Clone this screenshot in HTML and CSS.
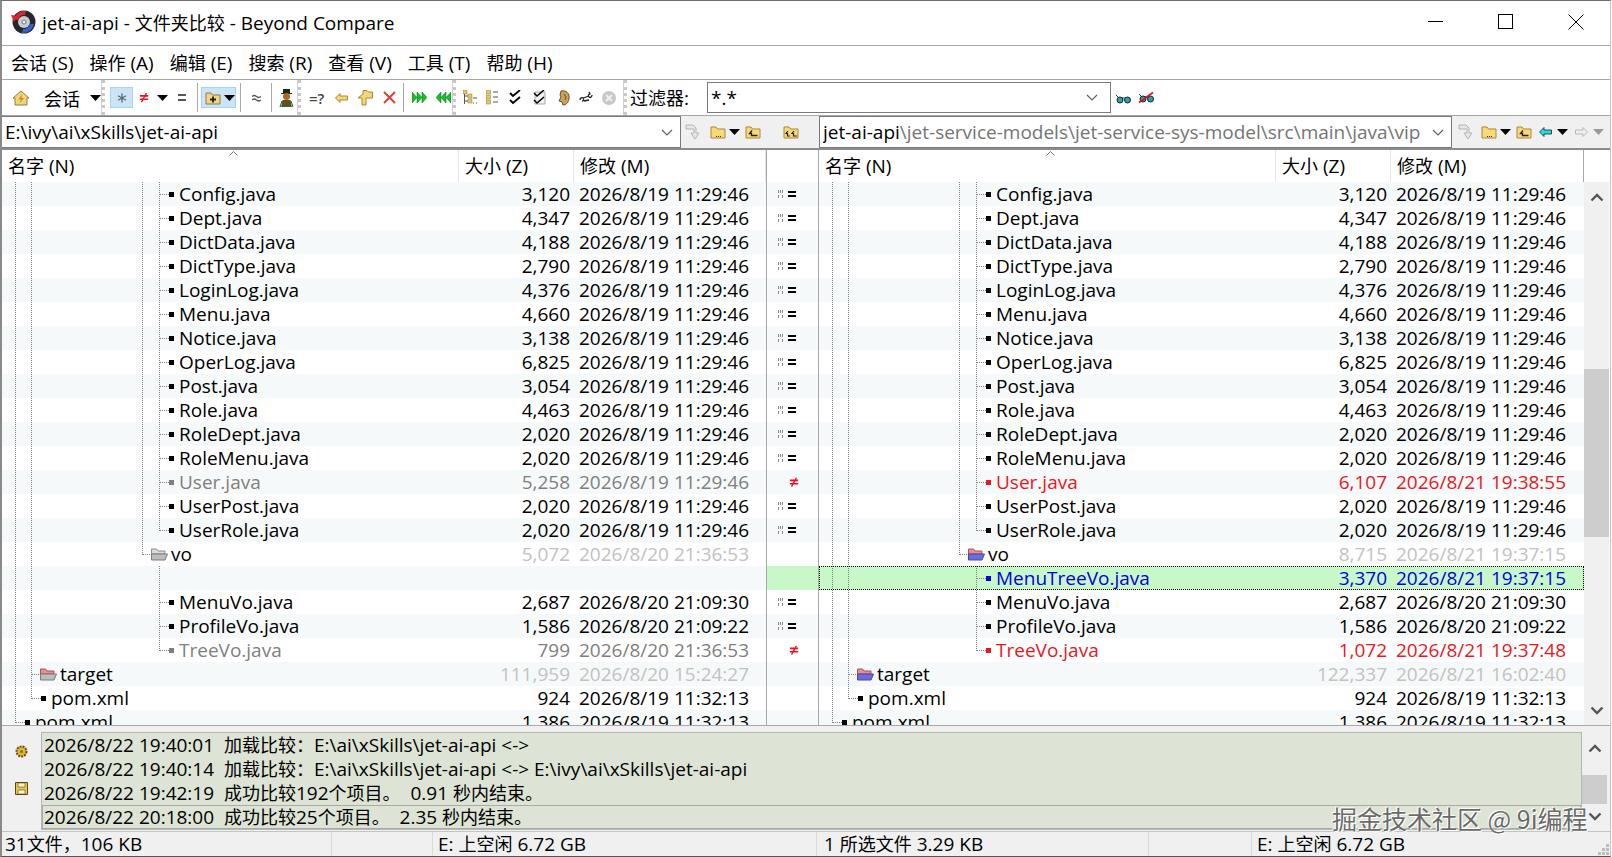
FILE: index.html
```html
<!DOCTYPE html>
<html lang="zh">

<head>
    <meta charset="UTF-8">
    <title>jet-ai-api - 文件夹比较 - Beyond Compare</title>
    <link rel="stylesheet" href="styles.css">
</head>

<body>
    <svg class="sprites" xmlns="http://www.w3.org/2000/svg">
        <symbol id="tri" viewBox="0 0 11 6"><path d="M0 0h11L5.500 6z" /></symbol>
        <symbol id="folder" viewBox="0 0 16 16"><path d="M1 3h5l1.500 2H15v9H1z" fill="#f7d978" stroke="#a8893a" /><path d="M6 12h1v1H6zm2 0h1v1H8zm2 0h1v1h-1z" fill="#333" /></symbol>
        <symbol id="folder-up" viewBox="0 0 16 16"><path d="M1 3h5l1.500 2H15v9H1z" fill="#f7d978" stroke="#a8893a" /><path d="M7 6.500L4.500 9.500H6.500v2h6" fill="none" stroke="#222" stroke-width="1.300" /></symbol>
        <symbol id="folder-up2" viewBox="0 0 16 16"><path d="M1 3h5l1.500 2H15v9H1z" fill="#f7d978" stroke="#a8893a" /><path d="M5 7L3 9.500h1.500V12H7M11 7L9 9.500h1.500V12H14" fill="none" stroke="#222" stroke-width="1.200" /></symbol>
        <symbol id="go-grey" viewBox="0 0 16 18"><path d="M1 2h7l3 3v5h3l-4 6-4-6h3V6H1z" fill="#e6e6e6" stroke="#b4b4b4" /></symbol>
        <symbol id="open-grey" viewBox="0 0 18 14"><path d="M1.500 2h5l1.500 2h7v3H1.500z" fill="#dcdcdc" stroke="#8c8c8c" /><path d="M1.500 13V7h16L15 13z" fill="#bdbdbd" stroke="#7c7c7c" /></symbol>
        <symbol id="open-left" viewBox="0 0 18 14"><path d="M1.500 2h5l1.500 2h7v3H1.500z" fill="#f08a94" stroke="#a45560" /><path d="M1.500 13V7h16L15 13z" fill="#bdbdbd" stroke="#7c7c7c" /></symbol>
        <symbol id="open-right" viewBox="0 0 18 14"><path d="M1.500 2h5l1.500 2h7v3H1.500z" fill="#f08a94" stroke="#a45560" /><path d="M1.500 13V7h16L15 13z" fill="#6c6ce0" stroke="#4a4a9c" /></symbol>
        <symbol id="same" viewBox="0 0 22 11">
            <path d="M0 1h1v3H0zm2 0h1v3H2zm2 0h1v3H4zM0 6h1v3H0zm4 0h1v3H4z" fill="#8a8a8a" />
            <path d="M10 2h8v2h-8zm0 4h8v2h-8z" fill="#000" />
        </symbol>
        <symbol id="diff" viewBox="0 0 12 12"><path d="M1 3.500h10M1 7.500h10" stroke="#f01020" stroke-width="2" /><path d="M9 0L3 11" stroke="#f01020" stroke-width="1.600" /></symbol>
        <symbol id="chev-up" viewBox="0 0 14 9"><path d="M1.500 7.500L7 2l5.500 5.500" fill="none" stroke="#555" stroke-width="2.400" /></symbol>
        <symbol id="chev-down" viewBox="0 0 14 9"><path d="M1.500 1.500L7 7l5.500-5.500" fill="none" stroke="#555" stroke-width="2.400" /></symbol>
        <symbol id="combo" viewBox="0 0 12 7"><path d="M1 1l5 5 5-5" fill="none" stroke="#606060" stroke-width="1.200" /></symbol>
        <symbol id="goggle" viewBox="0 0 17 12"><path d="M1 3l2 2M7 6h3" stroke="#333" fill="none" /><circle cx="5" cy="8" r="3" fill="#2fa39c" stroke="#124" /><circle cx="12.500" cy="8" r="3" fill="#2fa39c" stroke="#124" /></symbol>
    </svg>

    <div class="window">
        <div class="titlebar">
            <svg class="app-icon" width="26" height="26" viewBox="0 0 26 26">
                <circle cx="13" cy="13" r="11.500" fill="#26262c" />
                <path d="M3 10A11 11 0 0 1 15 2L14 6A7 7 0 0 0 7 11z" fill="#d8262a" />
                <path d="M0 6l7 1-4 6z" fill="#d8262a" />
                <path d="M23 15A11 11 0 0 1 11 24L12 20A7 7 0 0 0 19 15z" fill="#2a62d0" />
                <circle cx="13" cy="13" r="6" fill="#c8ccd0" />
                <circle cx="13" cy="13" r="2" fill="#f4f4f4" stroke="#777" />
            </svg>
            <span class="app-title">jet-ai-api - <span class="cjk">文件夹比较</span> - Beyond Compare</span>
            <div class="win-btns">
                <svg width="16" height="16" viewBox="0 0 16 16"><path d="M0 7.500h15" stroke="#000" /></svg>
                <svg width="16" height="16" viewBox="0 0 16 16"><rect x="0.500" y="0.500" width="14" height="14" fill="none" stroke="#000" /></svg>
                <svg width="16" height="16" viewBox="0 0 16 16"><path d="M0.500 0.500l15 15M15.500 0.500l-15 15" stroke="#000" /></svg>
            </div>
        </div>

        <div class="menubar">
            <span class="menu-item"><span class="cjk">会话</span> (S)</span>
            <span class="menu-item"><span class="cjk">操作</span> (A)</span>
            <span class="menu-item"><span class="cjk">编辑</span> (E)</span>
            <span class="menu-item"><span class="cjk">搜索</span> (R)</span>
            <span class="menu-item"><span class="cjk">查看</span> (V)</span>
            <span class="menu-item"><span class="cjk">工具</span> (T)</span>
            <span class="menu-item"><span class="cjk">帮助</span> (H)</span>
        </div>

        <div class="toolbar">
            <div class="tb-group group-session">
                <svg width="18" height="16" viewBox="0 0 18 16">
                    <path d="M9 1l8 7h-2v7H3V8H1z" fill="#ecd67c" stroke="#8f7f45" />
                    <path d="M10 4L6.500 9.500H9L7.500 13.500 12 8H9.500z" fill="#d98a1e" />
                </svg>
                <span class="session-label cjk">会话</span>
                <svg class="tri" width="11" height="6"><use href="#tri" /></svg>
            </div>

            <div class="tb-group group-filter">
                <div class="tb-on star-btn"><svg width="10" height="10" viewBox="0 0 10 10"><path d="M5 0.500v9M1 2.800l8 4.400M9 2.800l-8 4.400" stroke="#5d6670" stroke-width="1.300" /></svg></div>
                <svg class="ml6" width="10" height="12" viewBox="0 0 12 12"><use href="#diff" /></svg>
                <svg class="ml8 tri" width="11" height="6"><use href="#tri" /></svg>
                <svg class="ml10" width="8" height="7" viewBox="0 0 8 7"><path d="M0 0h8v2H0zm0 5h8v2H0z" fill="#555" /></svg>
                <i class="sep ml11"></i>
                <div class="tb-on folder-btn ml3">
                    <svg width="16" height="14" viewBox="0 0 16 14"><path d="M1 2h5l1.500 2H15v9H1z" fill="#f0d48a" stroke="#8f7a3c" /><path d="M8 5.500v6M5 8.500h6" stroke="#222" stroke-width="1.800" /></svg>
                    <svg class="tri" width="11" height="6"><use href="#tri" /></svg>
                </div>
                <i class="sep ml4"></i>
                <svg class="ml11" width="9" height="8" viewBox="0 0 9 8"><path d="M0 2.500q2-2 4.500 0T9 2.500M0 6q2-2 4.500 0T9 6" fill="none" stroke="#555" stroke-width="1.300" /></svg>
                <i class="sep ml10"></i>
                <svg class="ml7" width="15" height="20" viewBox="0 0 15 20">
                    <path d="M4 1h7v4H4zM2 5h11v1H2z" fill="#1c2a1c" />
                    <circle cx="7.500" cy="8.500" r="3.500" fill="#b5651d" />
                    <path d="M2 19l2-7h7l2 7z" fill="#7a4a20" />
                    <path d="M4 19v-7M7.500 19v-7M11 19v-7M1 19l2-6M14 19l-2-6" stroke="#162" />
                </svg>
            </div>

            <div class="tb-group group-copy">
                <span class="eq-q">=?</span>
                <svg class="ml10" width="13" height="10" viewBox="0 0 13 10"><path d="M0.500 5L5 0.500V3h7.500v4H5v2.500z" fill="#f4d878" stroke="#a08a3a" /></svg>
                <svg class="ml9" width="16" height="16" viewBox="0 0 16 16"><path d="M6 0.500h4l1.500 1.500h4v6H9v7H5V8H1l5-4z" fill="#f4d878" stroke="#a08a3a" /></svg>
                <svg class="ml10" width="13" height="13" viewBox="0 0 13 13"><path d="M1 1l11 11M12 1L1 12" stroke="#e04030" stroke-width="2" /></svg>
                <i class="sep ml7"></i>
                <svg class="ml8" width="15" height="11" viewBox="0 0 15 11"><path d="M0 0l5 5.500L0 11zM5 0l5 5.500L5 11zM10 0l5 5.500-5 5.500z" fill="#18c02c" stroke="#0a6a18" stroke-width="0.500" /></svg>
                <svg class="ml9" width="15" height="11" viewBox="0 0 15 11"><path d="M15 0l-5 5.500 5 5.500zM10 0L5 5.500l5 5.500zM5 0L0 5.500 5 11z" fill="#18c02c" stroke="#0a6a18" stroke-width="0.500" /></svg>
            </div>

            <div class="tb-group group-view">
                <svg width="15" height="15" viewBox="0 0 15 15"><path d="M1.500 3v11M2 6h4M2 11h4M10 13h1M13 13h1M10 8h4" stroke="#555" fill="none" /><rect x="0" y="0" width="4" height="4" fill="#e6c860" stroke="#8f7a3c" stroke-width="0.500" /><rect x="5" y="4" width="4" height="4" fill="#e6c860" stroke="#8f7a3c" stroke-width="0.500" /><rect x="5" y="9" width="4" height="4" fill="#e6c860" stroke="#8f7a3c" stroke-width="0.500" /></svg>
                <svg class="ml8" width="12" height="15" viewBox="0 0 12 15"><path d="M7 2h5M7 7h5M7 12h5" stroke="#555" /><rect x="0.500" y="0" width="4" height="4" fill="#e6c860" stroke="#8f7a3c" stroke-width="0.500" /><rect x="0.500" y="5" width="4" height="4" fill="#e6c860" stroke="#8f7a3c" stroke-width="0.500" /><rect x="0.500" y="10" width="4" height="4" fill="#e6c860" stroke="#8f7a3c" stroke-width="0.500" /></svg>
                <svg class="ml11" width="12" height="15" viewBox="0 0 12 15"><path d="M1 3l3 3 7-6M1 10l3 3 7-6" fill="none" stroke="#000" stroke-width="1.800" /></svg>
                <svg class="ml12" width="13" height="15" viewBox="0 0 13 15"><path d="M2 2h10v12H2z" fill="#f0f0f0" stroke="#aaa" /><path d="M1 3l3 3 7-6M1 10l3 3 7-6" fill="none" stroke="#000" stroke-width="1.500" /></svg>
                <svg class="ml12" width="12" height="16" viewBox="0 0 12 16"><path d="M3 1c5-1 9 2 8 8-1 4-3 6-6 6l-1-3-3-1 2-4-1-2z" fill="#c9a25c" stroke="#6a5224" /><path d="M6 4l2 3-1 3" fill="none" stroke="#6a5224" /></svg>
                <svg class="ml9" width="14" height="13" viewBox="0 0 14 13"><path d="M1 9c0-2 2-3 3-2s1 3-1 3M13 4c0 2-2 3-3 2S9 3 11 3M4 7l6-2M5 10l5-1M10 1l1 2-2 1" fill="none" stroke="#222" stroke-width="1.300" /></svg>
                <svg class="ml9" width="14" height="14" viewBox="0 0 14 14"><circle cx="7" cy="7" r="7" fill="#c8c8c8" /><path d="M4 4l6 6M10 4l-6 6" stroke="#f0f0f0" stroke-width="2" /></svg>
            </div>

            <div class="tb-group group-name">
                <span class="filter-label"><span class="cjk">过滤器</span>:</span>
                <div class="filter-box">
                    <span>*.*</span>
                    <svg width="12" height="7"><use href="#combo" /></svg>
                </div>
                <svg class="ml4" width="17" height="12"><use href="#goggle" /></svg>
                <svg class="ml6" width="17" height="13" viewBox="0 0 17 13"><use href="#goggle" width="17" height="12" /><path d="M1 11.500L15 1.500" stroke="#e01010" stroke-width="1.600" /></svg>
            </div>
        </div>

        <div class="pathbar">
            <div class="path-box path-left">
                <span class="path-text">E:\ivy\ai\xSkills\jet-ai-api</span>
                <svg width="12" height="7"><use href="#combo" /></svg>
            </div>
            <svg class="ml4" width="16" height="18"><use href="#go-grey" /></svg>
            <svg class="ml9" width="16" height="16"><use href="#folder" /></svg>
            <svg class="ml3 tri" width="11" height="6"><use href="#tri" /></svg>
            <svg class="ml5" width="16" height="16"><use href="#folder-up" /></svg>
            <svg class="ml-wide" width="16" height="16"><use href="#folder-up2" /></svg>

            <div class="path-box path-right">
                <span class="path-text">jet-ai-api<span class="path-dim">\jet-service-models\jet-service-sys-model\src\main\java\vip\vo</span></span>
                <svg width="12" height="7"><use href="#combo" /></svg>
            </div>
            <svg class="ml6" width="16" height="18"><use href="#go-grey" /></svg>
            <svg class="ml7" width="16" height="16"><use href="#folder" /></svg>
            <svg class="ml3 tri" width="11" height="6"><use href="#tri" /></svg>
            <svg class="ml5" width="16" height="16"><use href="#folder-up" /></svg>
            <svg class="ml7" width="13" height="10" viewBox="0 0 13 10"><path d="M0.500 5L5 0.500V3h7.500v4H5v2.500z" fill="#19e0e6" stroke="#222" stroke-width="0.800" /></svg>
            <svg class="ml5 tri" width="11" height="6"><use href="#tri" /></svg>
            <svg class="ml7" width="13" height="10" viewBox="0 0 13 10"><path d="M12.500 5L8 0.500V3H0.500v4H8v2.500z" fill="#eee" stroke="#b8b8b8" /></svg>
            <svg class="ml5 tri tri-off" width="11" height="6"><use href="#tri" /></svg>
        </div>

        <div class="panes">
            <div class="pane">
                <div class="head">
                    <div class="head-name"><span class="cjk">名字</span> (N)<svg class="sort" width="9" height="5" viewBox="0 0 9 5"><path d="M0.500 4.500l4-4 4 4" fill="none" stroke="#777" /></svg></div>
                    <div class="head-size"><span class="cjk">大小</span> (Z)</div>
                    <div class="head-date"><span class="cjk">修改</span> (M)</div>
                </div>
                <div class="rows">
                    <div class="row"><div class="name deep"><i class="stub"></i><b class="sq"></b>Config.java</div><div class="size">3,120</div><div class="date">2026/8/19 11:29:46</div></div>
                    <div class="row"><div class="name deep"><i class="stub"></i><b class="sq"></b>Dept.java</div><div class="size">4,347</div><div class="date">2026/8/19 11:29:46</div></div>
                    <div class="row"><div class="name deep"><i class="stub"></i><b class="sq"></b>DictData.java</div><div class="size">4,188</div><div class="date">2026/8/19 11:29:46</div></div>
                    <div class="row"><div class="name deep"><i class="stub"></i><b class="sq"></b>DictType.java</div><div class="size">2,790</div><div class="date">2026/8/19 11:29:46</div></div>
                    <div class="row"><div class="name deep"><i class="stub"></i><b class="sq"></b>LoginLog.java</div><div class="size">4,376</div><div class="date">2026/8/19 11:29:46</div></div>
                    <div class="row"><div class="name deep"><i class="stub"></i><b class="sq"></b>Menu.java</div><div class="size">4,660</div><div class="date">2026/8/19 11:29:46</div></div>
                    <div class="row"><div class="name deep"><i class="stub"></i><b class="sq"></b>Notice.java</div><div class="size">3,138</div><div class="date">2026/8/19 11:29:46</div></div>
                    <div class="row"><div class="name deep"><i class="stub"></i><b class="sq"></b>OperLog.java</div><div class="size">6,825</div><div class="date">2026/8/19 11:29:46</div></div>
                    <div class="row"><div class="name deep"><i class="stub"></i><b class="sq"></b>Post.java</div><div class="size">3,054</div><div class="date">2026/8/19 11:29:46</div></div>
                    <div class="row"><div class="name deep"><i class="stub"></i><b class="sq"></b>Role.java</div><div class="size">4,463</div><div class="date">2026/8/19 11:29:46</div></div>
                    <div class="row"><div class="name deep"><i class="stub"></i><b class="sq"></b>RoleDept.java</div><div class="size">2,020</div><div class="date">2026/8/19 11:29:46</div></div>
                    <div class="row"><div class="name deep"><i class="stub"></i><b class="sq"></b>RoleMenu.java</div><div class="size">2,020</div><div class="date">2026/8/19 11:29:46</div></div>
                    <div class="row older"><div class="name deep"><i class="stub"></i><b class="sq"></b>User.java</div><div class="size">5,258</div><div class="date">2026/8/19 11:29:46</div></div>
                    <div class="row"><div class="name deep"><i class="stub"></i><b class="sq"></b>UserPost.java</div><div class="size">2,020</div><div class="date">2026/8/19 11:29:46</div></div>
                    <div class="row"><div class="name deep last"><i class="stub"></i><b class="sq"></b>UserRole.java</div><div class="size">2,020</div><div class="date">2026/8/19 11:29:46</div></div>
                    <div class="row dim"><div class="name vo"><i class="stub"></i><svg class="fold" width="18" height="14"><use href="#open-grey" /></svg><span class="fold-name">vo</span></div><div class="size">5,072</div><div class="date">2026/8/20 21:36:53</div></div>
                    <div class="row"><div class="name sub"></div></div>
                    <div class="row"><div class="name sub"><i class="stub"></i><b class="sq"></b>MenuVo.java</div><div class="size">2,687</div><div class="date">2026/8/20 21:09:30</div></div>
                    <div class="row"><div class="name sub"><i class="stub"></i><b class="sq"></b>ProfileVo.java</div><div class="size">1,586</div><div class="date">2026/8/20 21:09:22</div></div>
                    <div class="row older"><div class="name sub last"><i class="stub"></i><b class="sq"></b>TreeVo.java</div><div class="size">799</div><div class="date">2026/8/20 21:36:53</div></div>
                    <div class="row dim"><div class="name lvl2"><i class="stub stub-short"></i><svg class="fold" width="18" height="14"><use href="#open-left" /></svg><span class="fold-name">target</span></div><div class="size">111,959</div><div class="date">2026/8/20 15:24:27</div></div>
                    <div class="row"><div class="name lvl2 last"><i class="stub"></i><b class="sq"></b>pom.xml</div><div class="size">924</div><div class="date">2026/8/19 11:32:13</div></div>
                    <div class="row"><div class="name lvl1"><i class="stub"></i><b class="sq"></b>pom.xml</div><div class="size">1,386</div><div class="date">2026/8/19 11:32:13</div></div>
                </div>
            </div>

            <div class="gutter">
                <div class="head"></div>
                <div class="rows">
                    <div class="row mark"><svg width="22" height="11"><use href="#same" /></svg></div>
                    <div class="row mark"><svg width="22" height="11"><use href="#same" /></svg></div>
                    <div class="row mark"><svg width="22" height="11"><use href="#same" /></svg></div>
                    <div class="row mark"><svg width="22" height="11"><use href="#same" /></svg></div>
                    <div class="row mark"><svg width="22" height="11"><use href="#same" /></svg></div>
                    <div class="row mark"><svg width="22" height="11"><use href="#same" /></svg></div>
                    <div class="row mark"><svg width="22" height="11"><use href="#same" /></svg></div>
                    <div class="row mark"><svg width="22" height="11"><use href="#same" /></svg></div>
                    <div class="row mark"><svg width="22" height="11"><use href="#same" /></svg></div>
                    <div class="row mark"><svg width="22" height="11"><use href="#same" /></svg></div>
                    <div class="row mark"><svg width="22" height="11"><use href="#same" /></svg></div>
                    <div class="row mark"><svg width="22" height="11"><use href="#same" /></svg></div>
                    <div class="row mark"><svg class="ne" width="10" height="11" viewBox="0 0 12 12"><use href="#diff" /></svg></div>
                    <div class="row mark"><svg width="22" height="11"><use href="#same" /></svg></div>
                    <div class="row mark"><svg width="22" height="11"><use href="#same" /></svg></div>
                    <div class="row mark"></div>
                    <div class="row mark sel-fill"></div>
                    <div class="row mark"><svg width="22" height="11"><use href="#same" /></svg></div>
                    <div class="row mark"><svg width="22" height="11"><use href="#same" /></svg></div>
                    <div class="row mark"><svg class="ne" width="10" height="11" viewBox="0 0 12 12"><use href="#diff" /></svg></div>
                    <div class="row mark"></div>
                    <div class="row mark"></div>
                    <div class="row mark"></div>
                </div>
            </div>

            <div class="pane pane-right">
                <div class="head">
                    <div class="head-name"><span class="cjk">名字</span> (N)<svg class="sort" width="9" height="5" viewBox="0 0 9 5"><path d="M0.500 4.500l4-4 4 4" fill="none" stroke="#777" /></svg></div>
                    <div class="head-size"><span class="cjk">大小</span> (Z)</div>
                    <div class="head-date"><span class="cjk">修改</span> (M)</div>
                </div>
                <div class="rows">
                    <div class="row"><div class="name deep"><i class="stub"></i><b class="sq"></b>Config.java</div><div class="size">3,120</div><div class="date">2026/8/19 11:29:46</div></div>
                    <div class="row"><div class="name deep"><i class="stub"></i><b class="sq"></b>Dept.java</div><div class="size">4,347</div><div class="date">2026/8/19 11:29:46</div></div>
                    <div class="row"><div class="name deep"><i class="stub"></i><b class="sq"></b>DictData.java</div><div class="size">4,188</div><div class="date">2026/8/19 11:29:46</div></div>
                    <div class="row"><div class="name deep"><i class="stub"></i><b class="sq"></b>DictType.java</div><div class="size">2,790</div><div class="date">2026/8/19 11:29:46</div></div>
                    <div class="row"><div class="name deep"><i class="stub"></i><b class="sq"></b>LoginLog.java</div><div class="size">4,376</div><div class="date">2026/8/19 11:29:46</div></div>
                    <div class="row"><div class="name deep"><i class="stub"></i><b class="sq"></b>Menu.java</div><div class="size">4,660</div><div class="date">2026/8/19 11:29:46</div></div>
                    <div class="row"><div class="name deep"><i class="stub"></i><b class="sq"></b>Notice.java</div><div class="size">3,138</div><div class="date">2026/8/19 11:29:46</div></div>
                    <div class="row"><div class="name deep"><i class="stub"></i><b class="sq"></b>OperLog.java</div><div class="size">6,825</div><div class="date">2026/8/19 11:29:46</div></div>
                    <div class="row"><div class="name deep"><i class="stub"></i><b class="sq"></b>Post.java</div><div class="size">3,054</div><div class="date">2026/8/19 11:29:46</div></div>
                    <div class="row"><div class="name deep"><i class="stub"></i><b class="sq"></b>Role.java</div><div class="size">4,463</div><div class="date">2026/8/19 11:29:46</div></div>
                    <div class="row"><div class="name deep"><i class="stub"></i><b class="sq"></b>RoleDept.java</div><div class="size">2,020</div><div class="date">2026/8/19 11:29:46</div></div>
                    <div class="row"><div class="name deep"><i class="stub"></i><b class="sq"></b>RoleMenu.java</div><div class="size">2,020</div><div class="date">2026/8/19 11:29:46</div></div>
                    <div class="row newer"><div class="name deep"><i class="stub"></i><b class="sq"></b>User.java</div><div class="size">6,107</div><div class="date">2026/8/21 19:38:55</div></div>
                    <div class="row"><div class="name deep"><i class="stub"></i><b class="sq"></b>UserPost.java</div><div class="size">2,020</div><div class="date">2026/8/19 11:29:46</div></div>
                    <div class="row"><div class="name deep last"><i class="stub"></i><b class="sq"></b>UserRole.java</div><div class="size">2,020</div><div class="date">2026/8/19 11:29:46</div></div>
                    <div class="row dim"><div class="name vo"><i class="stub"></i><svg class="fold" width="18" height="14"><use href="#open-right" /></svg><span class="fold-name">vo</span></div><div class="size">8,715</div><div class="date">2026/8/21 19:37:15</div></div>
                    <div class="row selected"><div class="name sub"><i class="stub"></i><b class="sq"></b>MenuTreeVo.java</div><div class="size">3,370</div><div class="date">2026/8/21 19:37:15</div></div>
                    <div class="row"><div class="name sub"><i class="stub"></i><b class="sq"></b>MenuVo.java</div><div class="size">2,687</div><div class="date">2026/8/20 21:09:30</div></div>
                    <div class="row"><div class="name sub"><i class="stub"></i><b class="sq"></b>ProfileVo.java</div><div class="size">1,586</div><div class="date">2026/8/20 21:09:22</div></div>
                    <div class="row newer"><div class="name sub last"><i class="stub"></i><b class="sq"></b>TreeVo.java</div><div class="size">1,072</div><div class="date">2026/8/21 19:37:48</div></div>
                    <div class="row dim"><div class="name lvl2"><i class="stub stub-short"></i><svg class="fold" width="18" height="14"><use href="#open-right" /></svg><span class="fold-name">target</span></div><div class="size">122,337</div><div class="date">2026/8/21 16:02:40</div></div>
                    <div class="row"><div class="name lvl2 last"><i class="stub"></i><b class="sq"></b>pom.xml</div><div class="size">924</div><div class="date">2026/8/19 11:32:13</div></div>
                    <div class="row"><div class="name lvl1"><i class="stub"></i><b class="sq"></b>pom.xml</div><div class="size">1,386</div><div class="date">2026/8/19 11:32:13</div></div>
                </div>
            </div>

            <div class="scroll-col">
                <div class="scroll-corner"></div>
                <div class="scrollbar">
                    <svg width="14" height="9"><use href="#chev-up" /></svg>
                    <div class="thumb thumb-main"></div>
                    <svg class="chev-bottom" width="14" height="9"><use href="#chev-down" /></svg>
                </div>
            </div>
        </div>

        <div class="logpanel">
            <div class="log-tools">
                <svg width="13" height="13" viewBox="0 0 13 13"><circle cx="6.500" cy="6.500" r="5" fill="#e0b830" stroke="#6a5214" stroke-width="2" stroke-dasharray="2 1" /><circle cx="6.500" cy="6.500" r="1.500" fill="#8a6a14" /></svg>
                <svg width="13" height="13" viewBox="0 0 13 13"><path d="M0.500 0.500h12v12h-12z" fill="#e8c84a" stroke="#5a4a10" /><path d="M3 1h7v4H3zM3 8h7v4H3z" fill="#fff6c8" stroke="#5a4a10" stroke-width="0.600" /></svg>
            </div>
            <div class="log-list">
                <div class="log-row">2026/8/22 19:40:01  <span class="cjk">加载比较&#xFF1A;</span>E:\ai\xSkills\jet-ai-api &lt;-&gt;</div>
                <div class="log-row">2026/8/22 19:40:14  <span class="cjk">加载比较&#xFF1A;</span>E:\ai\xSkills\jet-ai-api &lt;-&gt; E:\ivy\ai\xSkills\jet-ai-api</div>
                <div class="log-row">2026/8/22 19:42:19  <span class="cjk">成功比较</span>192<span class="cjk">个项目。</span>  0.91 <span class="cjk">秒内结束。</span></div>
                <div class="log-row log-current">2026/8/22 20:18:00  <span class="cjk">成功比较</span>25<span class="cjk">个项目。</span>  2.35 <span class="cjk">秒内结束。</span></div>
            </div>
            <div class="scroll-col">
                <div class="scrollbar">
                    <svg width="14" height="9"><use href="#chev-up" /></svg>
                    <div class="thumb thumb-log"></div>
                    <svg class="chev-bottom" width="14" height="9"><use href="#chev-down" /></svg>
                </div>
            </div>
        </div>

        <div class="statusbar">
            <div class="cell c-files">31<span class="cjk">文件&#xFF0C;</span>106 KB</div>
            <div class="cell c-blank"></div>
            <div class="cell c-free">E: <span class="cjk">上空闲</span> 6.72 GB</div>
            <div class="cell c-sel">1 <span class="cjk">所选文件</span> 3.29 KB</div>
            <div class="cell c-blank"></div>
            <div class="cell c-free2">E: <span class="cjk">上空闲</span> 6.72 GB</div>
            <svg class="grip" width="11" height="11" viewBox="0 0 11 11"><path d="M8 0h3v3H8zM4 4h3v3H4zM8 4h3v3H8zM0 8h3v3H0zM4 8h3v3H4zM8 8h3v3H8z" fill="#bdbdbd" /></svg>
        </div>

        <div class="watermark">掘金技术社区 @ 9i编程</div>
    </div>
</body>

</html>
```

FILE: styles.css
```css
html,
body {
    margin: 0;
    padding: 0;
    background: #fff;
    overflow: hidden;
}

body {
    font-family: "Open Sans", "Noto Sans CJK SC", sans-serif;
    font-size: 19px;
    color: #000;
}

.cjk {
    font-size: 18px;
}

.sprites {
    display: none;
}

svg {
    flex: none;
    display: block;
}

.window {
    position: relative;
    width: 1611px;
    height: 857px;
    box-sizing: border-box;
    border-top: 1px solid #6e6e6e;
    border-left: 2px solid #8a8a8a;
    border-right: 1px solid #c4c4c4;
    border-bottom: 1px solid #555;
    display: flex;
    flex-direction: column;
}

.ml3 { margin-left: 3px; }
.ml4 { margin-left: 4px; }
.ml5 { margin-left: 5px; }
.ml6 { margin-left: 6px; }
.ml7 { margin-left: 7px; }
.ml8 { margin-left: 8px; }
.ml9 { margin-left: 9px; }
.ml10 { margin-left: 10px; }
.ml11 { margin-left: 11px; }
.ml12 { margin-left: 12px; }
.ml-wide { margin-left: 22px; }

/* title + menu */
.titlebar {
    height: 44px;
    box-sizing: border-box;
    display: flex;
    align-items: center;
    padding: 0 0 2px 9px;
    flex: none;
}

.app-icon {
    margin-right: 5px;
}

.win-btns {
    margin-left: auto;
    margin-right: 26px;
    display: flex;
    gap: 54px;
}

.menubar {
    height: 33px;
    flex: none;
    border-top: 1px solid #a6a6a6;
    display: flex;
    align-items: center;
    padding-left: 9px;
    gap: 16px;
}

.menu-item {
    white-space: nowrap;
}

/* toolbar */
.toolbar {
    height: 35px;
    flex: none;
    border-top: 1px solid #a6a6a6;
    border-bottom: 1px solid #a6a6a6;
    display: flex;
    align-items: stretch;
}

.tb-group {
    display: flex;
    align-items: center;
    box-sizing: border-box;
    border-right: 1px solid #cfcfcf;
    flex: none;
}

.tb-group + .tb-group {
    border-left: 3px dotted #c8c8c8;
}

.group-session {
    width: 100px;
    padding-left: 10px;
}

.session-label {
    margin-left: 14px;
    width: 47px;
}

.group-filter {
    width: 196px;
    padding-left: 5px;
}

.group-copy {
    width: 155px;
    padding-left: 8px;
}

.group-view {
    width: 171px;
    padding-left: 7px;
}

.group-name {
    flex: 1;
    border-right: none;
    padding-left: 3px;
}

.tri {
    fill: #000;
}

.tri-off {
    fill: #9a9a9a;
}

.sep {
    width: 1px;
    height: 29px;
    background: #a8a8a8;
    flex: none;
}

.tb-on {
    height: 21px;
    box-sizing: border-box;
    background: #cce4f7;
    border: 1px solid #a8d4f4;
    display: flex;
    align-items: center;
}

.star-btn {
    width: 23px;
    justify-content: center;
}

.folder-btn {
    width: 35px;
    padding-left: 3px;
    gap: 3px;
}

.eq-q {
    color: #444;
    font-size: 15px;
    font-weight: 600;
    width: 16px;
}

.filter-label {
    width: 77px;
    white-space: nowrap;
}

.filter-box {
    width: 404px;
    height: 31px;
    box-sizing: border-box;
    border: 1px solid #7a7a7a;
    display: flex;
    align-items: center;
    justify-content: space-between;
    padding: 0 12px 0 3px;
}

/* path bar */
.pathbar {
    height: 32px;
    flex: none;
    background: #f0f0f0;
    border-bottom: 2px solid #8c8c8c;
    display: flex;
    align-items: center;
}

.path-box {
    height: 32px;
    box-sizing: border-box;
    background: #fff;
    border: 1px solid #7a7a7a;
    display: flex;
    align-items: center;
    justify-content: space-between;
    padding: 0 7px 0 3px;
    flex: none;
}

.path-left {
    width: 679px;
    border-left: none;
}

.path-right {
    width: 633px;
    margin-left: 20px;
}

.path-text {
    width: 598px;
    overflow: hidden;
    white-space: nowrap;
}

.path-dim {
    color: #757575;
}

/* file panes */
.panes {
    height: 575px;
    flex: none;
    display: flex;
}

.pane {
    width: 764px;
    flex: none;
}

.pane-right {
    width: 765px;
}

.head {
    height: 32px;
    display: flex;
    box-sizing: border-box;
    background: #fff;
}

.head > div {
    border-right: 1px solid #e4e4e4;
    padding-left: 6px;
    line-height: 32px;
    box-sizing: border-box;
    position: relative;
    white-space: nowrap;
}

.head-name {
    width: 457px;
}

.head-size {
    width: 115px;
}

.head-date {
    flex: 1;
}

.pane-right .head {
    border-right: 1px solid #a8a8a8;
}

.pane-right .head-date {
    border-right: none;
}

.sort {
    position: absolute;
    left: 227px;
    top: 1px;
}

.rows {
    height: 543px;
    overflow: hidden;
}

.row {
    height: 24px;
    line-height: 24px;
    display: flex;
    white-space: nowrap;
}

.row:nth-child(odd) {
    background: #f6f9f9;
}

.name {
    width: 455px;
    flex: none;
    box-sizing: border-box;
    display: flex;
    align-items: center;
    background-repeat: no-repeat;
    --dot: repeating-linear-gradient(to bottom, #808080 0 1px, transparent 1px 2px);
}

/* tree guides, drawn as dotted backgrounds */
.deep {
    padding-left: 157px;
    background-image: var(--dot), var(--dot), var(--dot), var(--dot);
    background-position: 13px 0, 29px 0, 140px 0, 157px 0;
    background-size: 1px 100%, 1px 100%, 1px 100%, 1px 100%;
}

.deep.last {
    background-size: 1px 100%, 1px 100%, 1px 100%, 1px 50%;
}

.vo {
    padding-left: 140px;
    background-image: var(--dot), var(--dot), var(--dot);
    background-position: 13px 0, 29px 0, 140px 0;
    background-size: 1px 100%, 1px 100%, 1px 50%;
}

.sub {
    padding-left: 157px;
    background-image: var(--dot), var(--dot), var(--dot);
    background-position: 13px 0, 29px 0, 157px 0;
    background-size: 1px 100%, 1px 100%, 1px 100%;
}

.sub.last {
    background-size: 1px 100%, 1px 100%, 1px 50%;
}

.lvl2 {
    padding-left: 29px;
    background-image: var(--dot), var(--dot);
    background-position: 13px 0, 29px 0;
    background-size: 1px 100%, 1px 100%;
}

.lvl2.last {
    background-size: 1px 100%, 1px 50%;
}

.lvl1 {
    padding-left: 13px;
    background-image: var(--dot);
    background-position: 13px 0;
    background-size: 1px 50%;
}

.stub {
    width: 10px;
    height: 0;
    border-top: 1px dotted #808080;
    flex: none;
}

.stub-short,
.vo .stub {
    width: 8px;
}

.sq {
    width: 5px;
    height: 5px;
    background: currentColor;
    margin-right: 5px;
    flex: none;
}

.fold-name {
    margin-left: 3px;
}

.size {
    width: 113px;
    flex: none;
    text-align: right;
}

.date {
    margin-left: 9px;
}

.older {
    color: #7f7f7f;
}

.dim .size,
.dim .date {
    color: #c2c2c2;
}

.newer {
    color: #ef1520;
}

.selected {
    color: #0000e6;
    background: #c8f8c8 !important;
    outline: 1px dotted #000;
    outline-offset: -1px;
}

/* middle column */
.gutter {
    width: 51px;
    flex: none;
    border-left: 1px solid #a8a8a8;
    border-right: 1px solid #a8a8a8;
}

.mark {
    align-items: center;
    padding-left: 11px;
}

.mark .ne {
    margin-left: 11px;
}

.sel-fill {
    background: #c8f8c8 !important;
}

/* scrollbars */
.scroll-col {
    flex: 1;
    display: flex;
    flex-direction: column;
}

.scroll-corner {
    height: 32px;
    flex: none;
}

.scrollbar {
    width: 25px;
    flex: 1;
    background: #f0f0f0;
    display: flex;
    flex-direction: column;
    align-items: center;
    padding-top: 11px;
    padding-bottom: 10px;
    box-sizing: border-box;
}

.thumb {
    width: 100%;
    background: #cdcdcd;
    flex: none;
}

.thumb-main {
    height: 168px;
    margin-top: 167px;
}

.thumb-log {
    height: 29px;
    margin-top: 22px;
}

.chev-bottom {
    margin-top: auto;
}

/* log */
.logpanel {
    height: 106px;
    flex: none;
    box-sizing: border-box;
    background: #f0f0f0;
    border-top: 1px solid #a8a8a8;
    display: flex;
    padding-top: 6px;
}

.logpanel .scrollbar {
    margin-top: -6px;
    padding-top: 18px;
    padding-bottom: 10px;
    height: 105px;
}

.log-tools {
    width: 39px;
    flex: none;
    display: flex;
    flex-direction: column;
    align-items: center;
    padding-top: 13px;
    gap: 24px;
    box-sizing: border-box;
}

.log-list {
    width: 1541px;
    height: 98px;
    flex: none;
    box-sizing: border-box;
    background: #dde4d5;
    border: 1px solid #b4b8ae;
}

.log-row {
    height: 24px;
    line-height: 24px;
    padding-left: 2px;
    white-space: pre;
}

.log-current {
    outline: 1px solid #a8aca2;
    outline-offset: -1px;
}

/* status bar */
.statusbar {
    flex: 1;
    background: #f0f0f0;
    border-top: 1px solid #c4c4c4;
    display: flex;
    align-items: center;
    position: relative;
}

.cell {
    box-sizing: border-box;
    height: 100%;
    padding-left: 3px;
    line-height: 24px;
    border-right: 1px solid #dadada;
    white-space: nowrap;
}

.cell:nth-child(1) { width: 330px; }
.cell:nth-child(2) { width: 101px; }
.cell:nth-child(3) { width: 384px; padding-left: 5px; }
.cell:nth-child(4) { width: 332px; padding-left: 7px; }
.cell:nth-child(5) { width: 103px; }
.cell:nth-child(6) { border-right: none; padding-left: 5px; }

.grip {
    position: absolute;
    right: 1px;
    bottom: 1px;
}

.watermark {
    position: absolute;
    left: 1330px;
    top: 800px;
    font-family: "Noto Sans CJK SC", sans-serif;
    font-size: 25px;
    line-height: 34px;
    color: #6a6a6a;
    white-space: nowrap;
    text-shadow: 1px 1px 0 #fff, -1px -1px 0 #fff;
}
```
